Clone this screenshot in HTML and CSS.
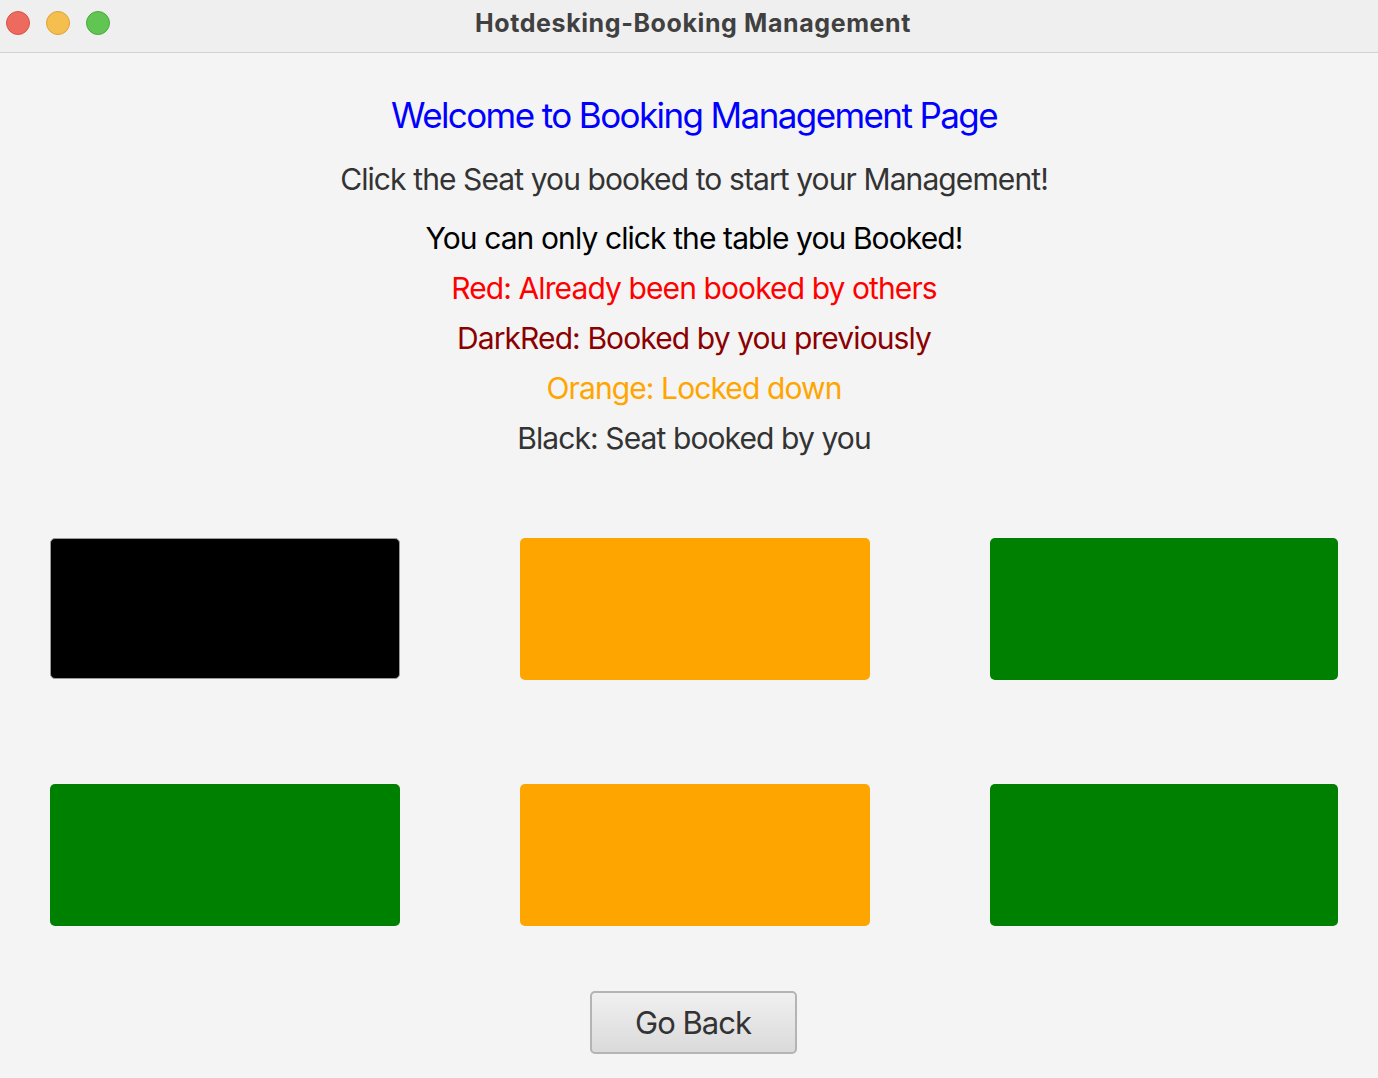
FILE: index.html
```html
<!DOCTYPE html>
<html>
<head>
<meta charset="utf-8">
<link rel="stylesheet" href="styles.css">
</head>
<body>
<div class="window">
  <header class="titlebar">
    <div class="lights">
      <span class="light red"></span>
      <span class="light yellow"></span>
      <span class="light green"></span>
    </div>
    <div class="title">Hotdesking-Booking Management</div>
  </header>
  <main class="content">
    <div class="intro">
      <h1 class="heading">Welcome to Booking Management Page</h1>
      <p class="sub">Click the Seat you booked to start your Management!</p>
      <div class="legend">
        <p class="line black">You can only click the table you Booked!</p>
        <p class="line red-t">Red: Already been booked by others</p>
        <p class="line darkred-t">DarkRed: Booked by you previously</p>
        <p class="line orange-t">Orange: Locked down</p>
        <p class="line grey-t">Black: Seat booked by you</p>
      </div>
    </div>
    <div class="seats">
      <button class="seat seat-black"></button>
      <button class="seat seat-orange"></button>
      <button class="seat seat-green"></button>
      <button class="seat seat-green"></button>
      <button class="seat seat-orange"></button>
      <button class="seat seat-green"></button>
    </div>
    <div class="actions">
      <button class="back">Go Back</button>
    </div>
  </main>
</div>
</body>
</html>
```
FILE: styles.css
```css
* { box-sizing: border-box; }
html, body { margin: 0; padding: 0; }
body {
  width: 1378px;
  height: 1078px;
  overflow: hidden;
  background: #f4f4f4;
  font-family: Inter, "Noto Sans", sans-serif;
}
.window { display: flex; flex-direction: column; height: 100%; }
.titlebar {
  height: 53px;
  background: #efefef;
  border-bottom: 1px solid #d2d2d2;
  display: flex;
  align-items: center;
  position: relative;
}
.lights { display: flex; gap: 16px; padding-left: 6px; position: absolute; left: 0; top: 11px; }
.light { width: 24px; height: 24px; border-radius: 50%; display: block; }
.light.red { background: #ed6a5e; border: 1px solid #d95447; }
.light.yellow { background: #f5bf4f; border: 1px solid #dea236; }
.light.green { background: #61c554; border: 1px solid #4ea83f; }
.title {
  flex: 1;
  text-align: center;
  font-weight: 700;
  font-size: 25px;
  color: #404040;
  letter-spacing: 0.6px;
  padding-left: 8px;
  margin-top: -6px;
}
.content { display: flex; flex-direction: column; align-items: center; }
.intro {
  width: 100%;
  padding-left: 10px;
  display: flex;
  flex-direction: column;
  align-items: center;
}
.heading {
  margin: 40px 0 0;
  font-weight: 400;
  font-size: 35px;
  line-height: 44px;
  color: #0000ff;
  letter-spacing: -1.6px;
}
.sub {
  margin: 24px 0 0;
  font-size: 30px;
  line-height: 36px;
  color: #333333;
  letter-spacing: -0.9px;
}
.legend { margin-top: 16px; display: flex; flex-direction: column; align-items: center; }
.line {
  margin: 0;
  font-size: 30px;
  line-height: 50px;
  letter-spacing: -0.9px;
}
.black { color: #000000; }
.red-t { color: #ff0000; }
.darkred-t { color: #8b0000; }
.orange-t { color: #ffa500; }
.grey-t { color: #333333; }
.seats {
  margin-top: 75px;
  width: 100%;
  padding: 0 40px 0 50px;
  display: grid;
  grid-template-columns: 350px 350px 348px;
  justify-content: space-between;
  row-gap: 104px;
}
.seat {
  height: 142px;
  border: none;
  border-radius: 5px;
  padding: 0;
}
.seat-black { background: #000; height: 141px; border: 1px solid #9a9a9a; }
.seat-orange { background: #ffa500; }
.seat-green { background: #008000; }
.actions { margin-top: 65px; padding-left: 8px; }
.back {
  width: 207px;
  height: 63px;
  border: 2px solid #b4b4b4;
  border-radius: 5px;
  background: linear-gradient(#f0f0f0, #dadada);
  font-family: Inter, "Noto Sans", sans-serif;
  font-size: 31px;
  color: #333;
  letter-spacing: -1px;
  padding: 0;
}
```
